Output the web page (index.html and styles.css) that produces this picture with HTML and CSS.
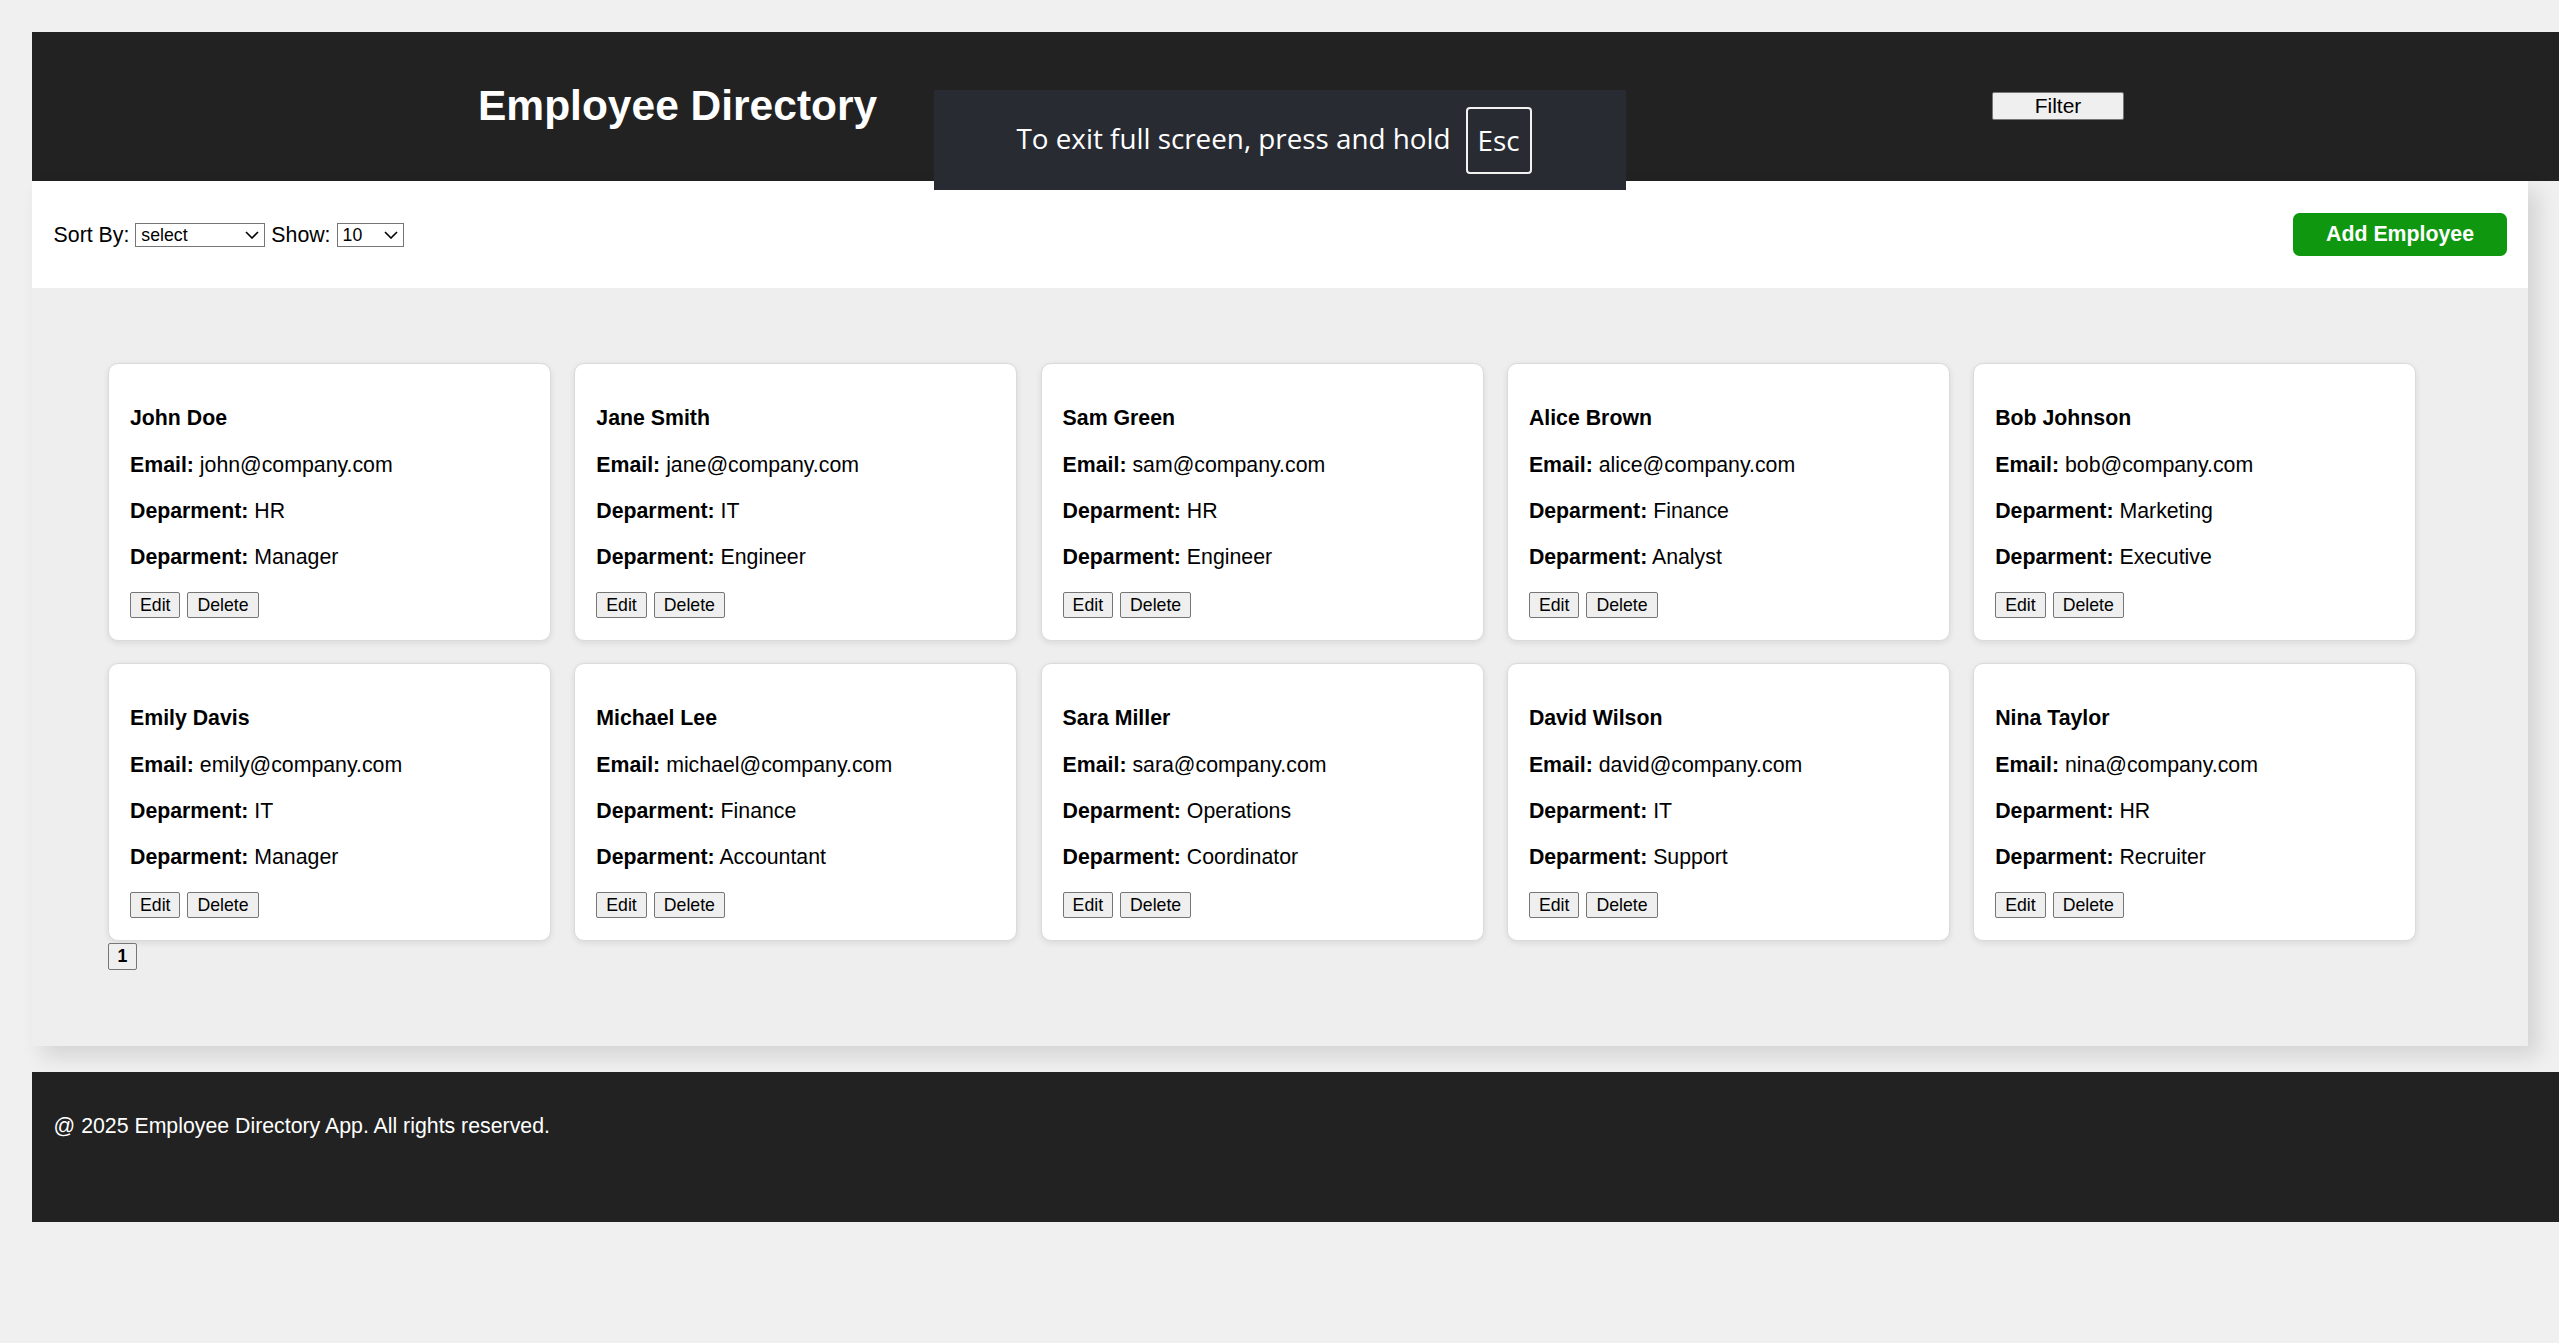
FILE: index.html
```html
<!DOCTYPE html>
<html lang="en">
<head>
<meta charset="utf-8">
<title>Employee Directory</title>
<link rel="stylesheet" href="styles.css">
</head>
<body>
<header class="top-bar">
  <h1 class="title">Employee Directory</h1>
  <button class="filter-btn">Filter</button>
</header>
<div class="container">
  <div class="controls">
    <div class="control-group">
      <label class="ctl-label">Sort By:</label>
      <span class="select-wrap sort"><select class="select"><option>select</option></select><svg class="chev" viewBox="0 0 14 8" width="14" height="8"><path d="M1 1 L7 7 L13 1" fill="none" stroke="#000" stroke-width="1.6"/></svg></span>
      <label class="ctl-label">Show:</label>
      <span class="select-wrap show"><select class="select"><option>10</option></select><svg class="chev" viewBox="0 0 14 8" width="14" height="8"><path d="M1 1 L7 7 L13 1" fill="none" stroke="#000" stroke-width="1.6"/></svg></span>
    </div>
    <button class="add-btn">Add Employee</button>
  </div>
  <main class="main">
    <div class="grid">
      <div class="card"><h3 class="name">John Doe</h3><p class="line"><b>Email:</b> john@company.com</p><p class="line"><b>Deparment:</b> HR</p><p class="line"><b>Deparment:</b> Manager</p><div class="actions"><button class="btn">Edit</button><button class="btn">Delete</button></div></div>
      <div class="card"><h3 class="name">Jane Smith</h3><p class="line"><b>Email:</b> jane@company.com</p><p class="line"><b>Deparment:</b> IT</p><p class="line"><b>Deparment:</b> Engineer</p><div class="actions"><button class="btn">Edit</button><button class="btn">Delete</button></div></div>
      <div class="card"><h3 class="name">Sam Green</h3><p class="line"><b>Email:</b> sam@company.com</p><p class="line"><b>Deparment:</b> HR</p><p class="line"><b>Deparment:</b> Engineer</p><div class="actions"><button class="btn">Edit</button><button class="btn">Delete</button></div></div>
      <div class="card"><h3 class="name">Alice Brown</h3><p class="line"><b>Email:</b> alice@company.com</p><p class="line"><b>Deparment:</b> Finance</p><p class="line"><b>Deparment:</b> Analyst</p><div class="actions"><button class="btn">Edit</button><button class="btn">Delete</button></div></div>
      <div class="card"><h3 class="name">Bob Johnson</h3><p class="line"><b>Email:</b> bob@company.com</p><p class="line"><b>Deparment:</b> Marketing</p><p class="line"><b>Deparment:</b> Executive</p><div class="actions"><button class="btn">Edit</button><button class="btn">Delete</button></div></div>
      <div class="card"><h3 class="name">Emily Davis</h3><p class="line"><b>Email:</b> emily@company.com</p><p class="line"><b>Deparment:</b> IT</p><p class="line"><b>Deparment:</b> Manager</p><div class="actions"><button class="btn">Edit</button><button class="btn">Delete</button></div></div>
      <div class="card"><h3 class="name">Michael Lee</h3><p class="line"><b>Email:</b> michael@company.com</p><p class="line"><b>Deparment:</b> Finance</p><p class="line"><b>Deparment:</b> Accountant</p><div class="actions"><button class="btn">Edit</button><button class="btn">Delete</button></div></div>
      <div class="card"><h3 class="name">Sara Miller</h3><p class="line"><b>Email:</b> sara@company.com</p><p class="line"><b>Deparment:</b> Operations</p><p class="line"><b>Deparment:</b> Coordinator</p><div class="actions"><button class="btn">Edit</button><button class="btn">Delete</button></div></div>
      <div class="card"><h3 class="name">David Wilson</h3><p class="line"><b>Email:</b> david@company.com</p><p class="line"><b>Deparment:</b> IT</p><p class="line"><b>Deparment:</b> Support</p><div class="actions"><button class="btn">Edit</button><button class="btn">Delete</button></div></div>
      <div class="card"><h3 class="name">Nina Taylor</h3><p class="line"><b>Email:</b> nina@company.com</p><p class="line"><b>Deparment:</b> HR</p><p class="line"><b>Deparment:</b> Recruiter</p><div class="actions"><button class="btn">Edit</button><button class="btn">Delete</button></div></div>
    </div>
    <div class="pagination"><button class="page-btn">1</button></div>
  </main>
</div>
<footer class="footer"><p class="footer-text">@ 2025 Employee Directory App. All rights reserved.</p></footer>

<div class="fs-bubble"><span class="fs-text">To exit full screen, press and hold</span><span class="esc-key">Esc</span></div>
</body>
</html>
```

FILE: styles.css
```css
html, body {
  margin: 0;
  padding: 0;
}
body {
  background: #f0f0f0;
  font-family: "Liberation Sans", Arial, sans-serif;
  font-size: 21.3px;
  color: #000;
  padding-top: 32px;
  overflow-x: hidden;
  min-height: 1343px;
  box-sizing: border-box;
}

.top-bar {
  margin-left: 32px;
  height: 149px;
  background: #222222;
  display: flex;
  align-items: center;
}
.title {
  margin: 0 0 0 446px;
  color: #fff;
  font-size: 42.5px;
  font-weight: bold;
  line-height: 48px;
  position: relative;
  top: -1px;
}
.filter-btn {
  margin-left: auto;
  margin-right: 435px;
  font-family: "Liberation Sans", Arial, sans-serif;
  font-size: 21px;
  line-height: 24px;
  height: 28px;
  width: 132px;
  padding: 0;
  background: #efefef;
  color: #000;
  border: 1px solid #767676;
  border-radius: 2px;
  position: relative;
  top: -1px;
}

.container {
  margin: 0 31px 0 32px;
  box-shadow: 10px 10px 20px rgba(0, 0, 0, 0.12);
}
.controls {
  height: 107px;
  background: #fff;
  display: flex;
  align-items: center;
  justify-content: space-between;
  padding: 0 21px 0 21.6px;
}
.control-group {
  display: flex;
  align-items: center;
  gap: 6px;
}
.ctl-label {
  font-size: 21.3px;
  line-height: 24px;
}
.select-wrap {
  position: relative;
  display: inline-block;
  height: 24px;
}
.select {
  appearance: none;
  -webkit-appearance: none;
  height: 24px;
  box-sizing: border-box;
  border: 1px solid #767676;
  border-radius: 0;
  background: #fff;
  font-family: "Liberation Sans", Arial, sans-serif;
  font-size: 17.7px;
  color: #000;
  padding: 0 0 0 5px;
  margin: 0;
  display: block;
}
.sort .select { width: 130px; }
.show .select { width: 67px; }
.chev {
  position: absolute;
  right: 6px;
  top: 8px;
  pointer-events: none;
}
.add-btn {
  height: 43px;
  padding: 0 33px;
  background: #109710;
  color: #fff;
  border: none;
  border-radius: 6.5px;
  font-family: "Liberation Sans", Arial, sans-serif;
  font-size: 21.3px;
  font-weight: bold;
}

.main {
  background: #eeeeee;
  padding: 75px 0 76px 76px;
}
.grid {
  display: grid;
  grid-template-columns: repeat(5, 443px);
  column-gap: 23.3px;
  row-gap: 22px;
}
.card {
  background: #fff;
  border: 1px solid #dadada;
  border-radius: 10px;
  box-shadow: 0 2px 6px rgba(0, 0, 0, 0.09);
  padding: 20px 21px 22px 21px;
  height: 278px;
  box-sizing: border-box;
}
.name {
  margin: 22px 0 23px;
  font-size: 21.3px;
  line-height: 24px;
  font-weight: bold;
}
.line {
  margin: 0 0 22px;
  font-size: 21.3px;
  line-height: 24px;
}
.line:nth-of-type(3) { margin-bottom: 23px; }
.actions {
  display: flex;
  gap: 7px;
}
.btn, .page-btn {
  height: 26px;
  padding: 0 9px;
  background: #efefef;
  border: 1px solid #767676;
  border-radius: 2px;
  font-family: "Liberation Sans", Arial, sans-serif;
  font-size: 17.7px;
  color: #000;
}
.pagination {
  margin-top: 2px;
  display: flex;
}
.page-btn {
  height: 27px;
  width: 29px;
  padding: 0;
  font-weight: bold;
}

.footer {
  margin: 26px 0 0 32px;
  height: 150px;
  background: #222222;
  color: #fff;
  padding: 0 21.6px;
  box-sizing: border-box;
  overflow: hidden;
}
.footer-text {
  margin: 42px 0 0;
  font-size: 21.3px;
  line-height: 24px;
}

.fs-bubble {
  position: absolute;
  left: 934px;
  top: 90px;
  width: 692px;
  height: 100px;
  background: #292b33;
  display: flex;
  align-items: center;
  justify-content: center;
  gap: 15px;
  font-family: "Open Sans", "Noto Sans", sans-serif;
  color: #fff;
  box-sizing: border-box;
}
.fs-text {
  font-size: 27.8px;
  position: relative;
  top: -2px;
  left: -6px;
}
.esc-key {
  width: 66px;
  height: 67px;
  box-sizing: border-box;
  border: 2px solid #f2f2f2;
  border-radius: 4px;
  display: flex;
  align-items: center;
  justify-content: center;
  font-size: 27.8px;
  position: relative;
  left: -6px;
}
```
